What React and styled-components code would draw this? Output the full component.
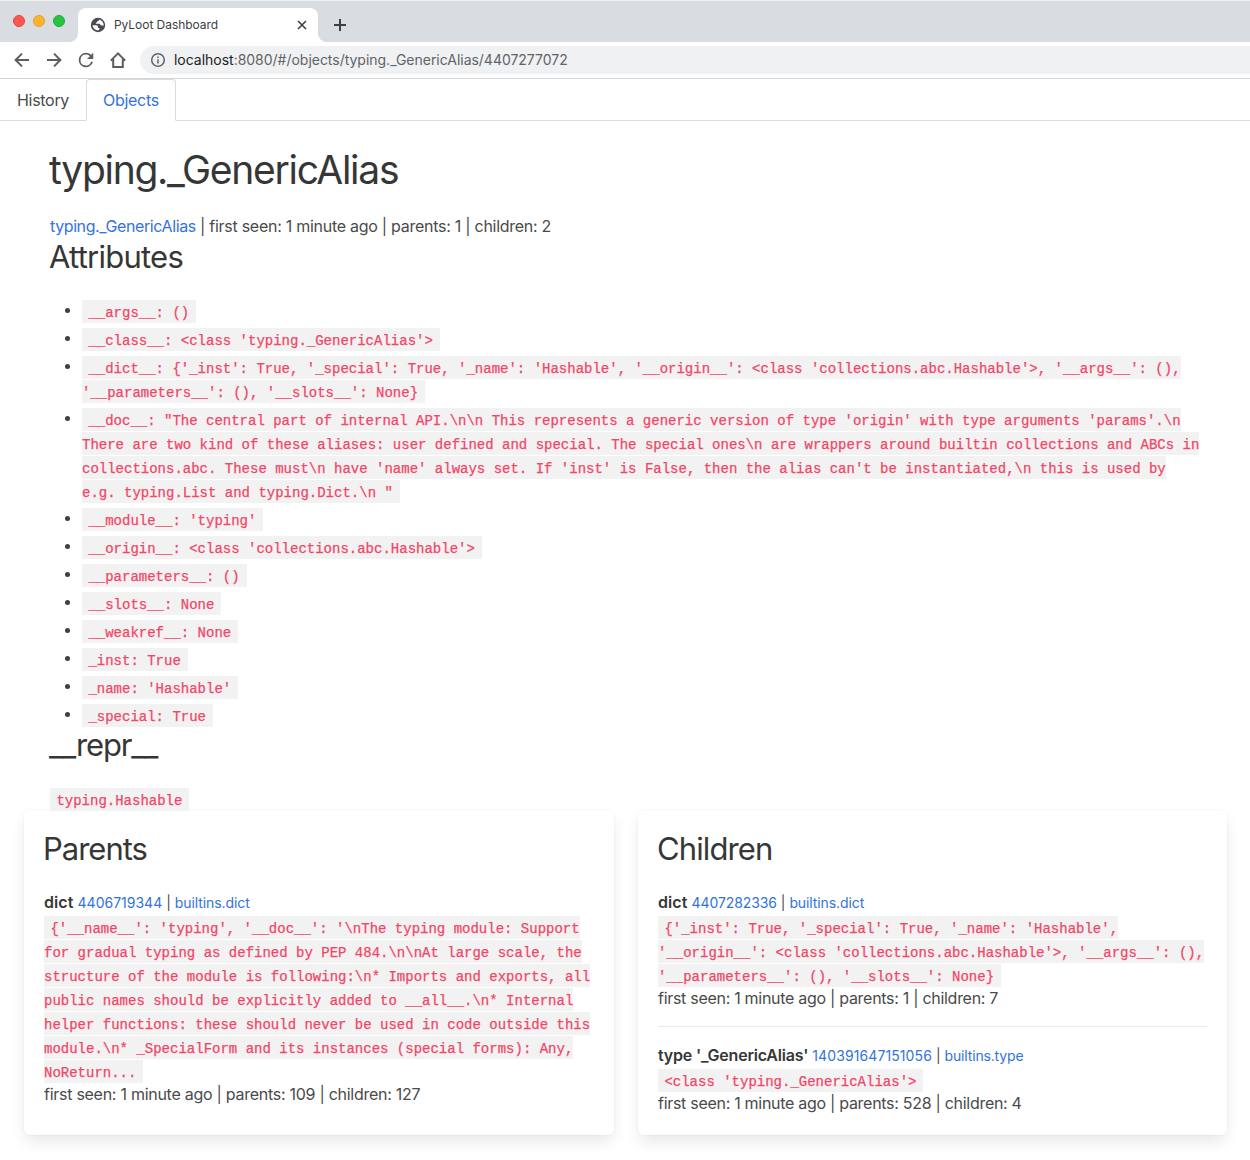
import React from "react";
import styled, { createGlobalStyle } from "styled-components";

const Global = createGlobalStyle`
  * { box-sizing: border-box; }
  html, body { margin: 0; padding: 0; background: #fff; overflow: hidden; }
  body {
    font-family: Inter, "Liberation Sans", sans-serif;
    font-size: 16px;
    line-height: 24px;
    color: #4a4a4a;
  }
`;

const Page = styled.div`
  width: 1250px;
  height: 1160px;
  overflow: hidden;
  background: #fff;
`;

const T = styled.span`
  letter-spacing: ${(p) => p.$ls || 0}px;
`;

/* browser frame */
const TabStrip = styled.div`
  display: flex;
  align-items: flex-end;
  height: 42px;
  background: #d9dce1;
  border-top: 1px solid #eaf0f0;
`;

const Lights = styled.div`
  display: flex;
  align-self: flex-start;
  gap: 8px;
  padding: 14px 0 0 13px;
  width: 78px;
`;

const Light = styled.span`
  width: 12px;
  height: 12px;
  border-radius: 50%;
  background: ${(p) => p.$c};
  border: 1px solid ${(p) => p.$b};
`;

const BrowserTab = styled.div`
  position: relative;
  display: flex;
  align-items: center;
  width: 240px;
  height: 34px;
  padding: 0 10px 0 12px;
  background: #fff;
  border-radius: 8px 8px 0 0;
  font-size: 12px;
  color: #3c4043;
  &::before, &::after {
    content: "";
    position: absolute;
    bottom: 0;
    width: 8px;
    height: 8px;
  }
  &::before { left: -8px; background: radial-gradient(circle at 0 0, transparent 7.5px, #fff 8px); }
  &::after { right: -8px; background: radial-gradient(circle at 100% 0, transparent 7.5px, #fff 8px); }
`;

const TabTitle = styled.span`
  flex: 1;
  padding-left: 8px;
  letter-spacing: ${(p) => p.$ls}px;
`;

const NewTab = styled.div`
  display: flex;
  align-items: center;
  height: 34px;
  padding-left: 15px;
`;

const Toolbar = styled.div`
  display: flex;
  align-items: center;
  height: 37px;
  padding-left: 12px;
  gap: 12px;
  border-bottom: 1px solid #d3d4d6;
`;

const Address = styled.div`
  display: flex;
  align-items: center;
  flex: 1;
  height: 28px;
  padding-left: 10px;
  gap: 8px;
  background: #f0f1f2;
  border-radius: 14px 0 0 14px;
  font-size: 14px;
  color: #5f6368;
`;

const Host = styled.span`
  color: #202124;
`;

/* application */
const Nav = styled.nav`
  display: flex;
  height: 42px;
  border-bottom: 1px solid #dbdbdb;
`;

const NavItem = styled.a`
  height: 42px;
  width: ${(p) => p.$w}px;
  padding: 8px 0 0 16px;
  border: 1px solid ${(p) => (p.$active ? "#dbdbdb" : "transparent")};
  border-bottom-color: ${(p) => (p.$active ? "#fff" : "transparent")};
  border-radius: 4px 4px 0 0;
  color: ${(p) => (p.$active ? "#3273dc" : "#4a4a4a")};
  background: ${(p) => (p.$active ? "#fff" : "transparent")};
  white-space: nowrap;
  letter-spacing: -0.3px;
`;

const Main = styled.main`
  height: 689px;
  padding: 24px 50px 0;
  white-space: nowrap;
`;

const H1 = styled.h1`
  margin: 0 0 20px -1px;
  font-size: 39px;
  line-height: 49px;
  font-weight: 400;
  color: #363636;
  letter-spacing: ${(p) => p.$ls || 0}px;
`;

const H2 = styled.h2`
  margin: ${(p) => p.$mt || 0}px 0 ${(p) => p.$mb || 0}px -1px;
  font-size: 31px;
  line-height: 38px;
  font-weight: 400;
  color: #363636;
  letter-spacing: ${(p) => p.$ls || 0}px;
`;

const Link = styled.a`
  color: #3273dc;
  letter-spacing: ${(p) => p.$ls || 0}px;
`;

const Meta = styled.div`
  height: 24px;
  margin-top: ${(p) => p.$mt || 0}px;
  white-space: nowrap;
  letter-spacing: ${(p) => p.$ls || -0.27}px;
`;

const List = styled.ul`
  display: flex;
  flex-direction: column;
  gap: 4px;
  margin: 0;
  padding: 0 0 0 15px;
  list-style: none;
`;

const Item = styled.li`
  display: flex;
  &::before {
    content: "";
    flex: none;
    width: 5.4px;
    height: 5.4px;
    margin: 8px 11.6px 0 0;
    border-radius: 50%;
    background: #3f3f3f;
  }
`;

const CodeBlock = styled.div`
  font-family: "Liberation Mono", monospace;
  font-size: 14px;
  line-height: 24px;
  padding-top: 1px;
  margin-bottom: -1px;
`;

const Code = styled.code`
  position: relative;
  z-index: 1;
  padding: 5px 7px 2px 6.4px;
  background: #f2f2f2;
  color: #f14668;
  -webkit-text-stroke: 0.25px #f14668;
  font-family: "Liberation Mono", monospace;
  font-size: 14px;
  white-space: pre;
`;

const Columns = styled.div`
  display: grid;
  grid-template-columns: 590px 589px;
  gap: 24px;
  height: 325px;
  padding: 0 0 0 24px;
`;

const Card = styled.section`
  padding: 20px;
  background: #fff;
  border-radius: 6px;
  box-shadow: 0 8px 16px -2px rgba(10, 10, 10, 0.1), 0 0 0 1px rgba(10, 10, 10, 0.02);
`;

const Entry = styled.article`
  & + & {
    margin-top: 16px;
    padding-top: 16px;
    border-top: 1px solid #ebebeb;
  }
`;

const EntryHead = styled.div`
  height: 26px;
  white-space: nowrap;
`;

const Name = styled.strong`
  font-weight: 600;
  color: #363636;
  letter-spacing: ${(p) => p.$ls || 0}px;
`;

const Small = styled.small`
  font-size: 14px;
  margin-left: 4px;
  letter-spacing: ${(p) => p.$ls || 0}px;
`;

const ATTRS = [
  "__args__: ()",
  "__class__: <class 'typing._GenericAlias'>",
  "__dict__: {'_inst': True, '_special': True, '_name': 'Hashable', '__origin__': <class 'collections.abc.Hashable'>, '__args__': (),\n'__parameters__': (), '__slots__': None}",
  "__doc__: \"The central part of internal API.\\n\\n This represents a generic version of type 'origin' with type arguments 'params'.\\n\nThere are two kind of these aliases: user defined and special. The special ones\\n are wrappers around builtin collections and ABCs in\ncollections.abc. These must\\n have 'name' always set. If 'inst' is False, then the alias can't be instantiated,\\n this is used by\ne.g. typing.List and typing.Dict.\\n \"",
  "__module__: 'typing'",
  "__origin__: <class 'collections.abc.Hashable'>",
  "__parameters__: ()",
  "__slots__: None",
  "__weakref__: None",
  "_inst: True",
  "_name: 'Hashable'",
  "_special: True",
];

const PARENT_REPR =
  "{'__name__': 'typing', '__doc__': '\\nThe typing module: Support\nfor gradual typing as defined by PEP 484.\\n\\nAt large scale, the\nstructure of the module is following:\\n* Imports and exports, all\npublic names should be explicitly added to __all__.\\n* Internal\nhelper functions: these should never be used in code outside this\nmodule.\\n* _SpecialForm and its instances (special forms): Any,\nNoReturn...";

const CHILD_REPR =
  "{'_inst': True, '_special': True, '_name': 'Hashable',\n'__origin__': <class 'collections.abc.Hashable'>, '__args__': (),\n'__parameters__': (), '__slots__': None}";

const stroke = { fill: "none", stroke: "#5a5d61", strokeWidth: 2 };

const Back = () => (
  <svg width="20" height="20" viewBox="0 0 20 20" {...stroke}>
    <path d="M17 10H4M10 3.6 3.6 10l6.4 6.4" />
  </svg>
);
const Forward = () => (
  <svg width="20" height="20" viewBox="0 0 20 20" {...stroke}>
    <path d="M3 10h13M10 3.6l6.4 6.4-6.4 6.4" />
  </svg>
);
const Reload = () => (
  <svg width="20" height="20" viewBox="1 1 22 22" fill="#5a5d61">
    <path d="M17.65 6.35A7.96 7.96 0 0 0 12 4a8 8 0 1 0 7.73 10h-2.080A6 6 0 1 1 12 6c1.660 0 3.140.690 4.220 1.780L13 11h7V4l-2.350 2.350z" />
  </svg>
);
const Home = () => (
  <svg width="20" height="20" viewBox="0 0 20 20" {...stroke}>
    <path d="M2.8 10.6 10 3.4l7.2 7.2M5.2 9v8h9.6V9" />
  </svg>
);
const Info = () => (
  <svg width="16" height="16" viewBox="0 0 16 16" fill="none" stroke="#5f6368" strokeWidth="1.5">
    <circle cx="8" cy="8" r="6.3" />
    <path d="M8 7.2v4.2M8 4.4v1.7" />
  </svg>
);
const Globe = () => (
  <svg width="16" height="16" viewBox="0 0 16 16">
    <circle cx="8" cy="8" r="7.2" fill="#484b50" />
    <path d="M2.5 8.300h3.600c1.200 0 2 .9 2 2v.8h1.300v1.100l-1.100 1.400A5.700 5.700 0 0 1 2.500 8.300z" fill="#fff" />
    <path d="M9.300 2.500c-.2 1.300-.9 1.700-2.100 1.700v1.300H5.900v1.200h3.300c.9 0 1.300.7 1.300 1.500h1.400c.7 0 1.100.4 1.600 1a5.700 5.700 0 0 0-4.200-6.700z" fill="#fff" />
  </svg>
);
const Close = () => (
  <svg width="12" height="12" viewBox="0 0 12 12" fill="none" stroke="#3c4043" strokeWidth="1.6">
    <path d="M2 2l8 8M10 2l-8 8" />
  </svg>
);
const Plus = () => (
  <svg width="14" height="14" viewBox="0 0 14 14" fill="none" stroke="#3c4043" strokeWidth="2">
    <path d="M7 1v12M1 7h12" />
  </svg>
);

export default function App() {
  return (
    <Page>
      <Global />
      <TabStrip>
        <Lights>
          <Light $c="#ff5750" $b="#e8443e" />
          <Light $c="#fdb32e" $b="#e2a02c" />
          <Light $c="#28c440" $b="#1fad33" />
        </Lights>
        <BrowserTab>
          <Globe />
          <TabTitle $ls={-0.05}>PyLoot Dashboard</TabTitle>
          <Close />
        </BrowserTab>
        <NewTab>
          <Plus />
        </NewTab>
      </TabStrip>
      <Toolbar>
        <Back />
        <Forward />
        <Reload />
        <Home />
        <Address>
          <Info />
          <T $ls={-0.02}>
            <Host>localhost</Host>:8080/#/objects/typing._GenericAlias/4407277072
          </T>
        </Address>
      </Toolbar>
      <Nav>
        <NavItem $w={86}>History</NavItem>
        <NavItem $w={90} $active>
          Objects
        </NavItem>
      </Nav>
      <Main>
        <H1 $ls={-1.28}>typing._GenericAlias</H1>
        <Meta $ls={-0.27}>
          <Link $ls={-0.4}>typing._GenericAlias</Link> | first seen: 1 minute ago | parents: 1 | children: 2
        </Meta>
        <H2 $mb={24} $ls={-0.75}>Attributes</H2>
        <List>
          {ATTRS.map((a) => (
            <Item key={a}>
              <CodeBlock>
                <Code>{a}</Code>
              </CodeBlock>
            </Item>
          ))}
        </List>
        <H2 $mt={-2} $mb={24} $ls={-1.15}>__repr__</H2>
        <CodeBlock>
          <Code>typing.Hashable</Code>
        </CodeBlock>
      </Main>
      <Columns>
        <Card>
          <H2 $mb={22} $ls={-1}>Parents</H2>
          <Entry>
            <EntryHead>
              <Name $ls={0.1}>dict</Name>
              <Small>
                <Link>4406719344</Link> | <Link $ls={-0.08}>builtins.dict</Link>
              </Small>
            </EntryHead>
            <CodeBlock>
              <Code>{PARENT_REPR}</Code>
            </CodeBlock>
            <Meta $mt={-3}>first seen: 1 minute ago | parents: 109 | children: 127</Meta>
          </Entry>
        </Card>
        <Card>
          <H2 $mb={22} $ls={-0.9}>Children</H2>
          <Entry>
            <EntryHead>
              <Name $ls={0.1}>dict</Name>
              <Small>
                <Link $ls={-0.1}>4407282336</Link> | <Link $ls={-0.1}>builtins.dict</Link>
              </Small>
            </EntryHead>
            <CodeBlock>
              <Code>{CHILD_REPR}</Code>
            </CodeBlock>
            <Meta $mt={-3} $ls={-0.29}>first seen: 1 minute ago | parents: 1 | children: 7</Meta>
          </Entry>
          <Entry>
            <EntryHead>
              <Name $ls={-0.2}>type '_GenericAlias'</Name>
              <Small>
                <Link $ls={0.1}>140391647151056</Link> | <Link $ls={-0.15}>builtins.type</Link>
              </Small>
            </EntryHead>
            <CodeBlock>
              <Code>{"<class 'typing._GenericAlias'>"}</Code>
            </CodeBlock>
            <Meta $mt={-3} $ls={-0.29}>first seen: 1 minute ago | parents: 528 | children: 4</Meta>
          </Entry>
        </Card>
      </Columns>
    </Page>
  );
}
